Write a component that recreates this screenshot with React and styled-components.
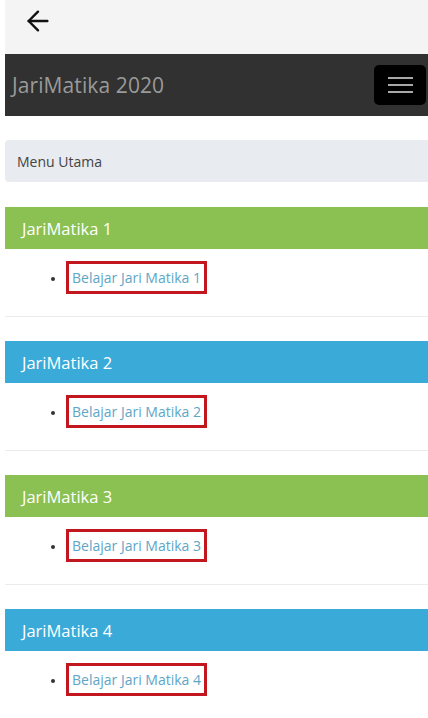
import React from 'react'
import styled, { createGlobalStyle } from 'styled-components'
import { ArrowLeft } from 'lucide-react'

const GlobalStyle = createGlobalStyle`
  body {
    margin: 0;
    background: #ffffff;
    font-family: 'Open Sans', 'Noto Sans', sans-serif;
  }
`

const Page = styled.div`
  padding-left: 5px;
  overflow: hidden;
`

const TopBar = styled.div`
  height: 54px;
  box-sizing: border-box;
  background-color: #f4f4f4;
  display: flex;
  align-items: flex-start;
  padding: 5px 0 0 17px;
  color: #111;
`

const NavBar = styled.div`
  height: 62px;
  background-color: #313131;
  display: flex;
  align-items: center;
  justify-content: space-between;
  padding: 0 2px 0 7px;
`

const Brand = styled.div`
  color: #9a9a9a;
  font-size: 21px;
  letter-spacing: 0.1px;
`

const Toggle = styled.button`
  width: 52px;
  height: 40px;
  background-color: #000;
  border: none;
  border-radius: 5px;
  display: flex;
  flex-direction: column;
  align-items: center;
  justify-content: center;
  gap: 5px;
  padding: 0;
`

const ToggleBar = styled.span`
  display: block;
  width: 25px;
  height: 2px;
  background-color: #a8a8a8;
`

const Breadcrumb = styled.div`
  margin-top: 24px;
  height: 42px;
  background-color: #e8ebef;
  border-radius: 4px 0 0 4px;
  display: flex;
  align-items: center;
  padding-left: 12px;
  font-size: 14px;
  color: #444;
`

const Panels = styled.div`
  margin-top: 25px;
  display: flex;
  flex-direction: column;
  gap: 24px;
`

const Panel = styled.section`
  border-bottom: 1px solid #ebebeb;
`

const PanelHead = styled.div`
  height: 42px;
  background-color: ${({ tone }) => (tone === 'green' ? '#8bc052' : '#3aabd8')};
  color: #fff;
  font-size: 16.5px;
  display: flex;
  align-items: center;
  padding-left: 17px;
`

const List = styled.ul`
  margin: 0;
  height: 67px;
  box-sizing: border-box;
  padding: 12px 0 0 61px;
  color: #333;
  font-size: 14px;
  line-height: 20px;
`

const Item = styled.li`
  &::marker {
    font-size: 12px;
  }
`

const MarkedLink = styled.a`
  display: inline-block;
  border: 3px solid #c2171f;
  padding: 4px 3px 3px 3px;
  color: #5ea6c6;
  text-decoration: none;
  font-size: 14px;
`

const sections = [
  { title: 'JariMatika 1', tone: 'green' },
  { title: 'JariMatika 2', tone: 'blue' },
  { title: 'JariMatika 3', tone: 'green' },
  { title: 'JariMatika 4', tone: 'blue' },
]

export default function App() {
  return (
    <Page>
      <GlobalStyle />
      <TopBar>
        <ArrowLeft size={32} strokeWidth={1.8} />
      </TopBar>
      <NavBar>
        <Brand>JariMatika 2020</Brand>
        <Toggle aria-label="menu">
          <ToggleBar />
          <ToggleBar />
          <ToggleBar />
        </Toggle>
      </NavBar>
      <Breadcrumb>Menu Utama</Breadcrumb>
      <Panels>
        {sections.map((s, i) => (
          <Panel key={s.title}>
            <PanelHead tone={s.tone}>{s.title}</PanelHead>
            <List>
              <Item>
                <MarkedLink href="#">Belajar Jari Matika {i + 1}</MarkedLink>
              </Item>
            </List>
          </Panel>
        ))}
      </Panels>
    </Page>
  )
}
